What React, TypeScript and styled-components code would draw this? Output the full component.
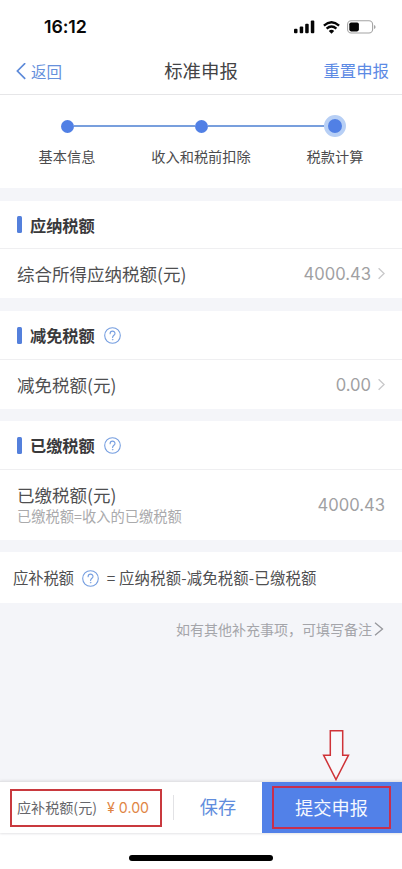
import React from "react";
import styled, { createGlobalStyle } from "styled-components";

const Global = createGlobalStyle`
  * { box-sizing: border-box; }
  body { margin: 0; background: #fff; font-family: "Noto Sans CJK SC", sans-serif; color: #444446; }
  button { font: inherit; border: 0; background: none; padding: 0; color: inherit; }
  svg { display: block; flex: none; }
`;
const Screen = styled.div`
  width: 402px; height: 869px; display: flex; flex-direction: column; overflow: hidden; background: #fff;
`;
const StatusBar = styled.div`
  height: 48px; flex: none; display: flex; justify-content: space-between; align-items: center;
  padding: 6px 26px 0 44px;
`;
const Clock = styled.span`
  font: 600 17.8px/22px Inter, sans-serif; color: #080808; letter-spacing: -0.1px;
`;
const StatusIcons = styled.div`display: flex; align-items: center; gap: 7.5px;`;
const NavBar = styled.header`
  height: 47px; flex: none; display: grid; grid-template-columns: 1fr auto 1fr; align-items: center;
  padding: 0 13px 0 16px; border-bottom: 1px solid #e6e6e8;
`;
const Back = styled.button`
  display: flex; align-items: center; gap: 5px; font-size: 15.5px; line-height: 24px; color: #6690dc;
`;
const BackText = styled.span`margin-top: -1px;`;
const Title = styled.h1`margin: -2px 0 0 -3px; font-size: 18.4px; line-height: 26px; font-weight: 400; color: #434345;`;
const Reset = styled.button`justify-self: end; margin-top: -2px; font-size: 16.4px; line-height: 24px; color: #5c8ae4;`;

const Steps = styled.section`
  height: 93px; flex: none; display: grid; grid-template-columns: repeat(3, 134px); padding-top: 20px;
`;
const Step = styled.div`display: flex; flex-direction: column; align-items: center;`;
const Track = styled.div`width: 100%; height: 22px; display: flex; align-items: center;`;
const Line = styled.i<{ $hidden?: boolean }>`
  flex: 1; height: 1.5px; background: ${(p) => (p.$hidden ? "transparent" : "#789fdd")};
`;
const Dot = styled.i<{ $active?: boolean }>`
  width: ${(p) => (p.$active ? 22 : 13)}px; height: ${(p) => (p.$active ? 22 : 13)}px; border-radius: 50%;
  background: #5180e5; ${(p) => p.$active && "border: 4.5px solid #b7cff5;"}
`;
const StepLabel = styled.span`margin-top: 8px; font-size: 14.2px; line-height: 22px; color: #4b4b4d; white-space: nowrap;`;

const Body = styled.main`flex: 1; min-height: 0; background: #f4f5f9; padding-top: 13px;`;
const Card = styled.section<{ $gap: number }>`background: #fff; margin-bottom: ${(p) => p.$gap}px;`;
const CardHead = styled.div<{ $height: number }>`
  height: ${(p) => p.$height}px; display: flex; align-items: center; padding: 0 17px;
  border-bottom: 1px solid #efeff1;
`;
const Accent = styled.i`width: 4.5px; height: 17px; border-radius: 1.5px; background: #5480dc; margin-right: 8.5px;`;
const CardTitle = styled.h2`margin: 0 9px 0 0; font-size: 16.2px; line-height: 24px; font-weight: 600; color: #39393b;`;
const Row = styled.div<{ $height: number }>`
  height: ${(p) => p.$height}px; display: flex; align-items: center; justify-content: space-between;
  padding: 0 17px;
`;
const Label = styled.div`font-size: 17.5px; line-height: 25px; color: #4f4f51;`;
const Hint = styled.div`font-size: 14.25px; line-height: 20px; height: 20px; color: #aaaaac; margin-bottom: 3px; margin-top: -1px;`;
const Value = styled.div`
  display: flex; align-items: center; gap: 7px; font: 400 16.6px/24px Inter, sans-serif; color: #a0a0a2;
`;
const Formula = styled.section`
  height: 51px; background: #fff; display: flex; align-items: center; gap: 8px; padding: 1px 13px 0;
  font-size: 15.4px; line-height: 24px; color: #4f4f51; white-space: nowrap;
`;
const FormulaText = styled.span<{ $spacing?: number }>`
  margin-top: -2px; letter-spacing: ${(p) => p.$spacing ?? 0}px;
`;
const Note = styled.div`
  display: flex; justify-content: flex-end; align-items: center; gap: 2px; padding: 14px 18px 0 0;
  font-size: 14px; line-height: 24px; color: #a4a5aa;
`;
const Footer = styled.footer`
  height: 52px; flex: none; display: flex; align-items: stretch; background: #fff; position: relative;
  border-top: 1px solid #e3e3e6; box-shadow: 0 -1px 2px #e6e7ea, 0 1px 2px #e4e4e6;
`;
const Due = styled.div`
  width: 152px; height: 38px; margin: 7px 0 0 10px; border: 2px solid #c9393e; display: flex;
  align-items: center; padding: 0 0 2px 5px; font-size: 14.1px; color: #66666b; white-space: nowrap;
`;
const Amount = styled.span`
  margin: 1px 0 0 10px; font: 400 14.2px/20px Inter, sans-serif; color: #df8544; display: flex; gap: 4px;
`;
const Divider = styled.i`width: 1px; height: 25px; margin: 13px 0 0 11px; background: #e2e2e5;`;
const Save = styled.button`width: 88px; padding-bottom: 3px; font-size: 18.2px; color: #618ddd;`;
const Submit = styled.button`
  flex: 1; display: flex; background: #5281e8; color: #f5f8ff; font-size: 18.2px; padding: 4px 11px 4px 10px;
`;
const SubmitFrame = styled.span`
  flex: 1; align-self: stretch; display: flex; align-items: center; justify-content: center;
  border: 2px solid #c72f4d; padding-bottom: 2px;
`;
const Pointer = styled.svg`position: absolute; left: 322px; top: -53px;`;
const HomeArea = styled.div`height: 36px; flex: none; display: flex; justify-content: center; padding-top: 22px;`;
const HomeBar = styled.i`width: 144px; height: 5.5px; border-radius: 3px; background: #000;`;

const Help = () => (
  <svg width="17" height="17" viewBox="0 0 17 17" fill="none" stroke="#759ee0" strokeWidth="1.1" strokeLinecap="round">
    <circle cx="8.5" cy="8.5" r="7.8" />
    <path d="M6.1 6.7C6.1 3.3 11 3.4 11 6.4C11 8.3 8.6 8.2 8.6 10.5" />
    <circle cx="8.6" cy="12.7" r=".35" fill="#759ee0" strokeWidth=".6" />
  </svg>
);
const Arrow = () => (
  <svg width="7" height="12" viewBox="0 0 7 12" fill="none" stroke="#c8c8ca" strokeWidth="1.4">
    <path d="M.6.3 6.1 5.5 .6 10.7" />
  </svg>
);
const Signal = () => (
  <svg width="21" height="14" viewBox="0 0 21 14" fill="#050505">
    <rect x="0" y="8.8" width="3.5" height="4.5" rx="1" />
    <rect x="5.7" y="6.5" width="3.5" height="6.8" rx="1" />
    <rect x="11.2" y="3.7" width="3.5" height="9.6" rx="1" />
    <rect x="16.8" y=".5" width="3.5" height="12.8" rx="1" />
  </svg>
);
const Wifi = () => (
  <svg width="17" height="13" viewBox="0 0 17 13" fill="none" stroke="#050505" strokeWidth="2.3">
    <path d="M.9 4.6Q8.5-2 16.1 4.6" />
    <path d="M3.6 7.6Q8.5 3.4 13.4 7.6" />
    <path d="M5.8 9.9Q8.5 7.8 11.2 9.9L8.5 12.7Z" fill="#050505" stroke="none" />
  </svg>
);
const Battery = () => (
  <svg width="29" height="14" viewBox="0 0 29 14">
    <rect x=".6" y=".8" width="25" height="12.2" rx="3.6" fill="none" stroke="#a4a4a4" strokeWidth="1.1" />
    <rect x="2.3" y="2.4" width="9.6" height="9" rx="1.8" fill="#050505" />
    <path d="M27 5Q28.6 5.4 28.6 7T27 9Z" fill="#a4a4a4" />
  </svg>
);

const steps = ["基本信息", "收入和税前扣除", "税款计算"];
const cards = [
  { title: "应纳税额", label: "综合所得应纳税额(元)", value: "4000.43", link: true, head: 48, row: 49, gap: 13 },
  { title: "减免税额", help: true, label: "减免税额(元)", value: "0.00", link: true, head: 49, row: 49, gap: 12 },
  { title: "已缴税额", help: true, label: "已缴税额(元)", hint: "已缴税额=收入的已缴税额", value: "4000.43", head: 49, row: 70, gap: 12 },
];

export default function App() {
  return (
    <Screen>
      <Global />
      <StatusBar>
        <Clock>16:12</Clock>
        <StatusIcons><Signal /><Wifi /><Battery /></StatusIcons>
      </StatusBar>
      <NavBar>
        <Back>
          <svg width="10" height="17" viewBox="0 0 10 17" fill="none" stroke="#5d8ad9" strokeWidth="1.7">
            <path d="M9.2.2 1.4 8l7.8 7.8" />
          </svg>
          <BackText>返回</BackText>
        </Back>
        <Title>标准申报</Title>
        <Reset>重置申报</Reset>
      </NavBar>
      <Steps>
        {steps.map((s, i) => (
          <Step key={s}>
            <Track>
              <Line $hidden={i === 0} />
              <Dot $active={i === 2} />
              <Line $hidden={i === 2} />
            </Track>
            <StepLabel>{s}</StepLabel>
          </Step>
        ))}
      </Steps>
      <Body>
        {cards.map((c) => (
          <Card key={c.title} $gap={c.gap}>
            <CardHead $height={c.head}>
              <Accent />
              <CardTitle>{c.title}</CardTitle>
              {c.help && <Help />}
            </CardHead>
            <Row $height={c.row}>
              <div>
                <Label>{c.label}</Label>
                {c.hint && <Hint>{c.hint}</Hint>}
              </div>
              <Value>{c.value}{c.link && <Arrow />}</Value>
            </Row>
          </Card>
        ))}
        <Formula>
          <FormulaText $spacing={-0.2}>应补税额</FormulaText>
          <Help />
          <FormulaText $spacing={0.15}>= 应纳税额-减免税额-已缴税额</FormulaText>
        </Formula>
        <Note>
          如有其他补充事项，可填写备注
          <svg width="10" height="14" viewBox="0 0 10 14" fill="none" stroke="#96979c" strokeWidth="1.3">
            <path d="M1 .8 8.5 7 1 13.2" />
          </svg>
        </Note>
      </Body>
      <Footer>
        <Due>应补税额(元)<Amount><span>¥</span><span>0.00</span></Amount></Due>
        <Divider />
        <Save>保存</Save>
        <Submit><SubmitFrame>提交申报</SubmitFrame></Submit>
        <Pointer width="30" height="54" viewBox="0 0 30 54" fill="#f8f8fb" stroke="#cf3338" strokeWidth="1.5">
          <path d="M8.3 1.8H20.7V26.2H26.5L14 50.5 1.6 26.2H8.3Z" />
        </Pointer>
      </Footer>
      <HomeArea><HomeBar /></HomeArea>
    </Screen>
  );
}
